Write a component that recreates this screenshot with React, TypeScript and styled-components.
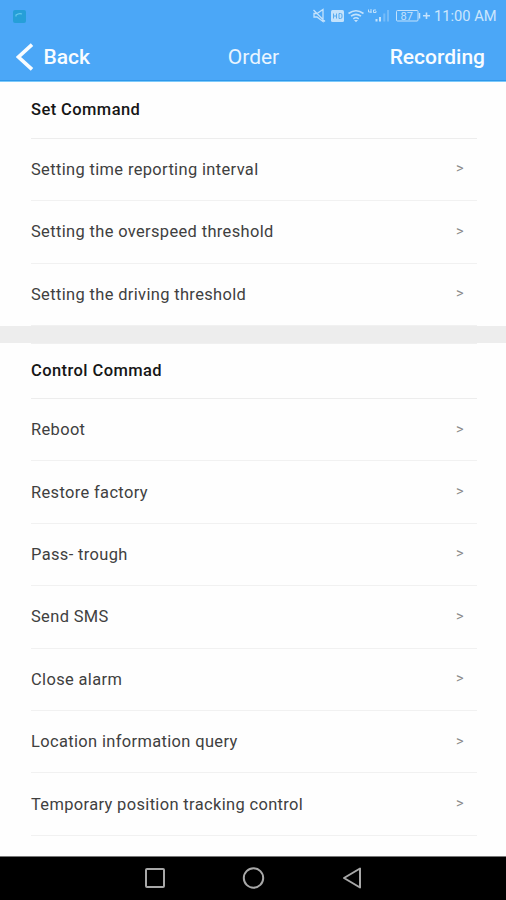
import React from "react";
import styled, { createGlobalStyle } from "styled-components";

const GlobalStyle = createGlobalStyle`
  * { box-sizing: border-box; }
  body { margin: 0; background: #fff; font-family: Roboto, "Liberation Sans", sans-serif; }
`;

const Screen = styled.div`
  width: 506px;
  height: 900px;
  display: flex;
  flex-direction: column;
  overflow: hidden;
  background: #fefefe;
`;

const Header = styled.header`
  flex: none;
  height: 82px;
  background: #4ba7f7;
  border-bottom: 1px solid #7dcafb;
  box-shadow: inset 0 -1px 0 #2e98ea;
`;

const StatusBar = styled.div`
  height: 32px;
  padding: 0 8px 0 13px;
  display: flex;
  align-items: center;
  justify-content: space-between;
`;

const StatusIcons = styled.div`
  display: flex;
  align-items: center;
  gap: 2px;
  color: #c3e2fc;
`;

const Clock = styled.span`
  width: 64px;
  font-size: 14.7px;
  line-height: 32px;
  white-space: nowrap;
  color: #cbe6fd;
`;

const NavBar = styled.nav`
  height: 49px;
  padding: 0 21px 0 16px;
  display: grid;
  grid-template-columns: 1fr auto 1fr;
  align-items: center;
  color: #f8fcff;
`;

const BackButton = styled.button`
  display: flex;
  align-items: center;
  gap: 9.5px;
  padding: 0;
  border: 0;
  background: none;
  color: inherit;
  font: 500 21px/50px Roboto, sans-serif;
`;

const Title = styled.h1`
  margin: 0;
  padding-left: 6px;
  font-size: 21px;
  font-weight: 400;
  line-height: 50px;
  color: #e9f5ff;
`;

const RecordingButton = styled(BackButton)`
  justify-self: end;
`;

const Content = styled.main`
  flex: 1;
  min-height: 0;
`;

const Section = styled.section`
  padding: 0 29px 0 31px;
`;

const Heading = styled.h2<{ $height: number; $topRule?: boolean }>`
  margin: 0;
  height: ${(p) => p.$height}px;
  border-top: ${(p) => (p.$topRule ? "1px solid #f0f0f0" : "0")};
  border-bottom: 1px solid #ededed;
  font-size: 16.5px;
  font-weight: 500;
  letter-spacing: 0.42px;
  line-height: ${(p) => (p.$topRule ? 53 : 55)}px;
  color: #161616;
`;

const Row = styled.div`
  height: 62.4px;
  padding-right: 12px;
  display: flex;
  align-items: center;
  justify-content: space-between;
  border-bottom: 1px solid #f1f1f1;
  font-size: 16.45px;
  letter-spacing: 0.36px;
  color: #404040;
`;

const Arrow = styled.span`
  width: 9px;
  padding-bottom: 1px;
  font-size: 14.5px;
  letter-spacing: 0;
  color: #8c8c8c;
`;

const Divider = styled.div`
  height: 17px;
  background: #ededed;
`;

const SystemBar = styled.footer`
  flex: none;
  height: 44px;
  padding-bottom: 1px;
  background: #000;
  border-top: 1px solid #777;
  display: flex;
  justify-content: center;
  align-items: center;
  gap: 74.5px;
`;

const settings = [
  "Setting time reporting interval",
  "Setting the overspeed threshold",
  "Setting the driving threshold",
];

const controls = [
  "Reboot",
  "Restore factory",
  "Pass- trough",
  "Send SMS",
  "Close alarm",
  "Location information query",
  "Temporary position tracking control",
];

const AppBadge = () => (
  <svg width="13" height="13" viewBox="0 0 13 13">
    <rect width="13" height="13" rx="2" fill="#269fd8" />
    <path d="M3 6.5V5q3-2.2 6-1" fill="none" stroke="#66c9ec" strokeWidth="1.2" />
  </svg>
);

const StatusGlyphs = () => (
  <svg width="120" height="18" viewBox="312 7 120 18" fill="none" stroke="currentColor">
    <path d="M314 13.5h3l6-4v12l-6-4.5h-3zM313.5 10l11.5 11.5" strokeWidth="1.3" />
    <rect x="331" y="10" width="13" height="12" rx="1.5" fill="currentColor" stroke="none" />
    <path d="M333.5 13.5v5M333.5 16h3M336.5 13.5v5M339 13.5h1.5q1.5 0 1.5 1.5v2q0 1.5-1.5 1.5H339z" stroke="#58abef" strokeWidth="1" />
    <path d="M348.5 13.5q7.5-5.5 15 0M351 16.2q5-3.6 10 0M353.3 18.8q2.7-2 5.4 0" strokeWidth="1.6" />
    <path d="M354 20h4l-2 2.3z" fill="currentColor" stroke="none" />
    <path d="M368.5 9.5v2.5h3M371 9v4M376 10h-2.5v2.5h2.5v-1.5" strokeWidth="1" />
    <path d="M376.5 19v2.5M380 17v4.5" strokeWidth="2" />
    <path d="M384.3 13.5v8M388 10v11.5" strokeWidth="2" opacity="0.35" />
    <rect x="396.5" y="10.5" width="21.5" height="10.5" rx="1" strokeWidth="1" />
    <path d="M419.5 13v5.5" strokeWidth="1.5" />
    <text x="400.5" y="20" fontFamily="Roboto, sans-serif" fontSize="11" fill="currentColor" stroke="none">87</text>
    <path d="M423 15.8h7M426.5 12.5v6.5" strokeWidth="1.6" />
  </svg>
);

const BackIcon = () => (
  <svg width="18" height="28" viewBox="0 0 18 28">
    <path d="M16 1.7 2.5 14 16 26.3" fill="none" stroke="currentColor" strokeWidth="3.6" />
  </svg>
);

const NavIcon = ({ children }: { children: React.ReactNode }) => (
  <svg width="24" height="24" viewBox="0 0 24 24" fill="none" stroke="#a8a8a8" strokeWidth="2" strokeLinejoin="round">
    {children}
  </svg>
);

const CommandRow = ({ label }: { label: string }) => (
  <Row>
    <span>{label}</span>
    <Arrow>&gt;</Arrow>
  </Row>
);

export default function App() {
  return (
    <Screen>
      <GlobalStyle />
      <Header>
        <StatusBar>
          <AppBadge />
          <StatusIcons>
            <StatusGlyphs />
            <Clock>11:00 AM</Clock>
          </StatusIcons>
        </StatusBar>
        <NavBar>
          <BackButton><BackIcon />Back</BackButton>
          <Title>Order</Title>
          <RecordingButton>Recording</RecordingButton>
        </NavBar>
      </Header>
      <Content>
        <Section>
          <Heading $height={56.8}>Set Command</Heading>
          {settings.map((label) => <CommandRow key={label} label={label} />)}
        </Section>
        <Divider />
        <Section>
          <Heading $height={56} $topRule>Control Commad</Heading>
          {controls.map((label) => <CommandRow key={label} label={label} />)}
        </Section>
      </Content>
      <SystemBar>
        <NavIcon><rect x="3" y="3" width="18" height="18" rx="1" /></NavIcon>
        <NavIcon><circle cx="12.5" cy="12" r="9.7" /></NavIcon>
        <NavIcon><path d="M20 2.5v19L4 12z" /></NavIcon>
      </SystemBar>
    </Screen>
  );
}
